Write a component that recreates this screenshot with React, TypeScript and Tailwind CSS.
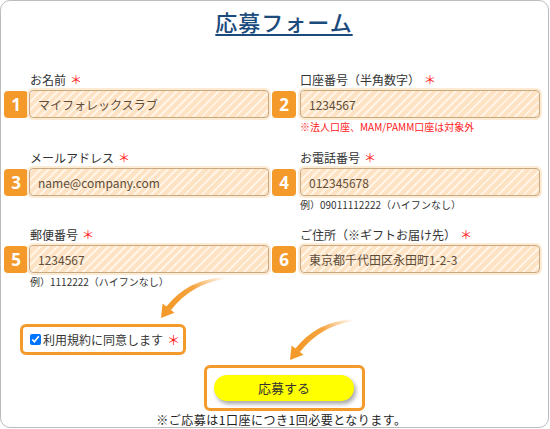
import React from 'react';

interface Field {
  no: number;
  label: string;
  value: string;
  note?: string;
  noteRed?: boolean;
}

const rows: Field[][] = [
  [
    { no: 1, label: 'お名前', value: 'マイフォレックスラブ' },
    { no: 2, label: '口座番号（半角数字）', value: '1234567', note: '※法人口座、MAM/PAMM口座は対象外', noteRed: true },
  ],
  [
    { no: 3, label: 'メールアドレス', value: 'name@company.com' },
    { no: 4, label: 'お電話番号', value: '012345678', note: '例）09011112222（ハイフンなし）' },
  ],
  [
    { no: 5, label: '郵便番号', value: '1234567', note: '例）1112222（ハイフンなし）' },
    { no: 6, label: 'ご住所（※ギフトお届け先）', value: '東京都千代田区永田町1-2-3' },
  ],
];

const Arrow: React.FC<{ className: string; id: string }> = ({ className, id }) => (
  <svg className={className} width="70" height="45" viewBox="0 0 70 45">
    <defs>
      <linearGradient id={id} x1="67" y1="2" x2="15" y2="30" gradientUnits="userSpaceOnUse">
        <stop offset="0" stopColor="#f39a2b" stopOpacity="0" />
        <stop offset="0.55" stopColor="#f39a2b" stopOpacity="0.9" />
        <stop offset="1" stopColor="#f39a2b" />
      </linearGradient>
    </defs>
    <path d="M67 1 Q30 3 8 31 L13 34 Q33 8 67 3 Z" fill={`url(#${id})`} />
    <polygon points="3,42 4.6,27.5 16.5,36.8" fill="#f39a2b" />
  </svg>
);

const Star = ({ className = '' }: { className?: string }) => (
  <span className={`text-[#ff1a1a] text-[12px] ${className}`}>＊</span>
);

const FieldCell: React.FC<{ f: Field; right: boolean }> = ({ f, right }) => (
  <div className="flex flex-col">
    <div className={`h-[18px] leading-[18px] text-[12px] text-[#333] ${right ? 'pl-[28px]' : 'pl-[26px]'}`}>
      {f.label}
      <Star className="ml-[4px]" />
    </div>
    <div className={`mt-[1px] flex ${right ? 'gap-[4px]' : 'gap-[1px]'}`}>
      <div className="w-[24px] h-[27px] mt-[1px] rounded-[4px] bg-[#f39a2b] text-white font-bold text-[17px] leading-[27px] text-center font-['Open_Sans',sans-serif]">
        {f.no}
      </div>
      <input
        readOnly
        value={f.value}
        className="w-[240px] h-[28px] rounded-[4px] border border-[#c7a881] shadow-[0_0_0_2px_#fdebd3] px-[8px] text-[12px] text-[#5e4c3a] outline-none bg-[repeating-linear-gradient(-45deg,#fde3c3_0px,#fde3c3_4px,#fff4e6_4px,#fff4e6_6px)]"
      />
    </div>
    {f.note && (
      <div
        className={`mt-[1px] leading-[16px] text-[10px] ${right ? 'pl-[28px]' : 'pl-[26px]'} ${
          f.noteRed ? 'text-[#ff1a1a]' : 'text-[#333]'
        }`}
      >
        {f.note}
      </div>
    )}
  </div>
);

export default function App() {
  return (
    <div className="w-[550px] h-[429px] bg-white font-['Noto_Sans_CJK_JP','Noto_Sans',sans-serif]">
      <div className="relative w-[549px] h-[428px] border border-[#bcbcbc] rounded-[10px] overflow-hidden">
        {/* title */}
        <div className="pt-[6px] pl-[19px] text-center">
          <h1 className="inline-block text-[22px] leading-[28px] font-medium tracking-[1px] text-[#1b4a7c] underline decoration-2 underline-offset-[3px]">
            応募フォーム
          </h1>
        </div>

        {/* fields */}
        <div className="mt-[35px] pl-[3px] grid grid-cols-[268px_268px]">
          {rows.map((row, i) => (
            <React.Fragment key={i}>
              {row.map((f, j) => (
                <div key={f.no} className={i === 0 ? 'h-[78px]' : i === 1 ? 'h-[77px]' : ''}>
                  <FieldCell f={f} right={j === 1} />
                </div>
              ))}
            </React.Fragment>
          ))}
        </div>

        {/* agree */}
        <div className="mt-[34px] ml-[19px] w-[166px] h-[31px] border-[3px] border-[#f39a2b] rounded-[6px] flex items-center pl-[7px] whitespace-nowrap">
          <input type="checkbox" defaultChecked className="w-[11px] h-[11px] m-0 shrink-0" />
          <span className="ml-[2px] text-[12px] text-[#333]">利用規約に同意します</span>
          <Star className="ml-[4px] text-[13px]" />
        </div>

        {/* submit */}
        <div className="mt-[10px] pl-[19px] flex justify-center">
          <div className="w-[161px] h-[46px] border-[3px] border-[#f39a2b] rounded-[6px] flex items-center justify-center">
            <button className="w-[140px] h-[26px] rounded-full bg-[#ffff00] shadow-[2px_3px_4px_rgba(0,0,0,0.35)] text-[13px] text-[#333]">
              応募する
            </button>
          </div>
        </div>

        <p className="mt-[2px] pl-[14px] text-center text-[12px] leading-[14px] tracking-[0.5px] text-[#222]">
          ※ご応募は1口座につき1回必要となります。
        </p>

        <Arrow id="a1" className="absolute left-[157px] top-[275px]" />
        <Arrow id="a2" className="absolute left-[286px] top-[317px]" />
      </div>
    </div>
  );
}
